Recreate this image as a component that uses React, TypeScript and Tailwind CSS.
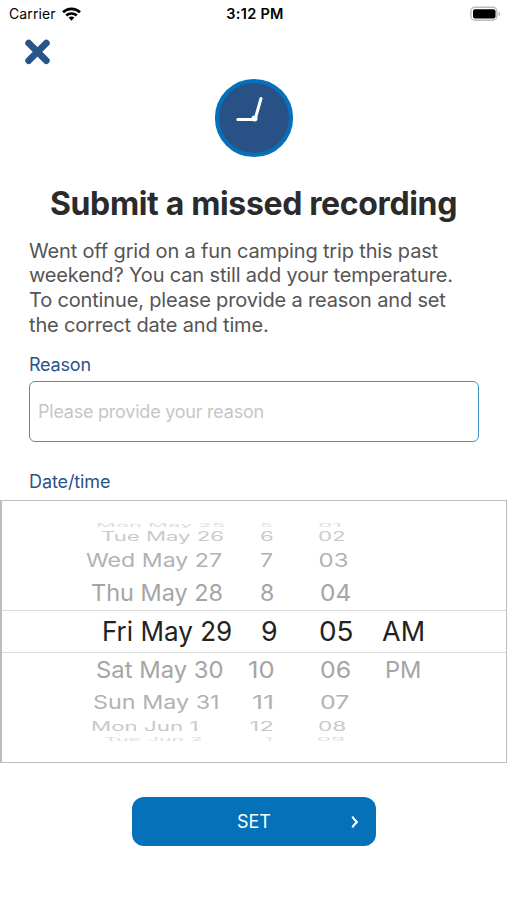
import React, { useLayoutEffect, useRef } from 'react'

interface WheelTextProps {
  text: string
  left: number
  width: number
  scaleY: number
}

interface WheelRow {
  rowClass: string
  textClass: string
  scaleY: number
  // text, left edge and drawn width of each column
  cells: [string, number, number][]
}

const rows: WheelRow[] = [
  { rowClass: 'h-[5px]', textClass: 'text-[#dedede]', scaleY: 0.2, cells: [['Mon May 25', 97, 127], ['5', 261, 11], ['01', 319, 22]] },
  { rowClass: 'h-[20px]', textClass: 'text-[#cacaca]', scaleY: 0.52, cells: [['Tue May 26', 102, 121], ['6', 260.5, 12], ['02', 318.5, 26]] },
  { rowClass: 'h-[28px]', textClass: 'text-[#b2b2b2]', scaleY: 0.78, cells: [['Wed May 27', 87, 134], ['7', 261, 11.5], ['03', 319.5, 28]] },
  { rowClass: 'h-[35px]', textClass: 'text-[#a5a5a5]', scaleY: 0.97, cells: [['Thu May 28', 91.5, 130], ['8', 260.5, 12.5], ['04', 320.5, 29.5]] },
  { rowClass: 'h-[43px] border-y border-[#dcdcdc]', textClass: 'text-[#222]', scaleY: 1.13, cells: [['Fri May 29', 102.5, 128], ['9', 261.5, 14.5], ['05', 320, 32.5], ['AM', 383, 40.5]] },
  { rowClass: 'h-[34px]', textClass: 'text-[#a5a5a5]', scaleY: 0.97, cells: [['Sat May 30', 97, 125], ['10', 248.5, 24.5], ['06', 320.5, 29], ['PM', 386, 34.5]] },
  { rowClass: 'h-[31px]', textClass: 'text-[#b2b2b2]', scaleY: 0.78, cells: [['Sun May 31', 94, 124.5], ['11', 252.5, 20.5], ['07', 320.5, 27]] },
  { rowClass: 'h-[18px]', textClass: 'text-[#cacaca]', scaleY: 0.52, cells: [['Mon Jun 1', 92, 106], ['12', 250.5, 22], ['08', 318.5, 26.5]] },
  { rowClass: 'h-[5px]', textClass: 'text-[#dedede]', scaleY: 0.2, cells: [['Tue Jun 2', 105, 97], ['1', 266, 6], ['09', 318, 26]] },
]

function WheelText({ text, left, width, scaleY }: WheelTextProps) {
  const ref = useRef<HTMLSpanElement>(null)

  useLayoutEffect(() => {
    const el = ref.current
    if (el) {
      // Squash the label so it looks wrapped around the drum
      el.style.transform = `scale(${width / (el.offsetWidth - 2)}, ${scaleY})`
    }
  }, [width, scaleY])

  return (
    <span ref={ref} className="absolute origin-left whitespace-nowrap" style={{ left: left - 2 }}>
      {text}
    </span>
  )
}

function DateWheel() {
  return (
    <div className="h-[263px] w-full border-t border-r border-b border-l-2 border-[#bdbdbd] pt-[21px]">
      {rows.map((row) => (
        <div
          key={row.cells[0][0]}
          className={`relative flex items-center text-2xl leading-7 ${row.rowClass} ${row.textClass}`}
        >
          {row.cells.map(([text, left, width]) => (
            <WheelText key={text} text={text} left={left - 1} width={width} scaleY={row.scaleY} />
          ))}
        </div>
      ))}
    </div>
  )
}

function StatusBar() {
  return (
    <div className="grid h-[27px] grid-cols-3 items-center pr-[6px] pl-[9px] text-black">
      <div className="flex items-center gap-[6px] text-[14px] tracking-[0.1px]">
        Carrier
        <svg width="19" height="14" viewBox="0 0 19 14" fill="none" stroke="currentColor" strokeWidth="2.7">
          <path d="M1 5.3C5.7.7 13.3.7 18 5.3" />
          <path d="M4.2 8.6c3-2.8 7.6-2.8 10.6 0" />
          <path d="M6.6 10.6c1.7-1.5 4.1-1.5 5.8 0L9.5 13.7z" fill="currentColor" stroke="none" />
        </svg>
      </div>
      <div className="text-center text-[14.5px] font-semibold tracking-[0.3px] whitespace-nowrap">3:12 PM</div>
      <svg className="justify-self-end" width="31" height="16" viewBox="0 0 31 16">
        <rect x=".9" y="1.3" width="26" height="13" rx="4" fill="#fff" stroke="#bcbcbc" strokeWidth="1.4" />
        <rect x="3" y="3.3" width="22.5" height="9.2" rx="2" fill="#000" />
        <path d="M28.6 5.5c2.2.8 2.2 4 0 4.8z" fill="#bcbcbc" />
      </svg>
    </div>
  )
}

export default function App() {
  return (
    <div className="flex h-[900px] w-[507px] flex-col overflow-hidden bg-white font-['Inter',sans-serif]">
      <StatusBar />

      <button className="mt-[12px] ml-[25px] size-[26px] text-[#285489]" aria-label="Close">
        <svg width="26" height="26" viewBox="0 0 26 26" stroke="currentColor" strokeWidth="6.8" strokeLinecap="round">
          <path d="M3.7 4.2 21.3 21.6M21.3 4.2 3.7 21.6" />
        </svg>
      </button>

      {/* Clock */}
      <svg className="mt-[13px] self-center" width="80" height="80" viewBox="0 0 80 80">
        <circle cx="40" cy="40" r="37" fill="#285286" stroke="#0671ba" strokeWidth="4.2" />
        <path d="M23.8 41.5H41L47 20.5" fill="none" stroke="#fff" strokeWidth="3" strokeLinecap="round" strokeLinejoin="round" />
        <circle cx="40.5" cy="40.5" r="3" fill="#fff" />
      </svg>

      <h1 className="mt-[26px] text-center text-[32px] leading-[40px] font-bold tracking-[-0.35px] whitespace-nowrap text-[#2b2b2b]">
        Submit a missed recording
      </h1>

      <p className="mt-[14.5px] ml-[29px] text-[20px] leading-[24.7px] tracking-[-0.16px] whitespace-nowrap text-[#555]">
        Went off grid on a fun camping trip this past
        <br />
        weekend? You can still add your temperature.
        <br />
        To continue, please provide a reason and set
        <br />
        the correct date and time.
      </p>

      <label className="mt-[15.7px] ml-[29px] text-[18px] leading-6 tracking-[-0.2px] text-[#2b538b]">Reason</label>
      <input
        className="mt-[4px] ml-[29px] h-[61px] w-[450px] rounded-md border-[1.5px] border-[#3d92c8] px-2 text-[18px] tracking-[-0.23px] placeholder:text-[#c6c6c6]"
        placeholder="Please provide your reason"
      />

      <label className="mt-[28px] mb-[6px] ml-[29px] text-[18px] leading-6 tracking-[-0.1px] text-[#2b538b]">Date/time</label>
      <DateWheel />

      <button className="mt-[34px] ml-[132px] grid h-[49px] w-[244px] grid-cols-[1fr_auto_1fr] items-center rounded-[12px] bg-[#0471b9] text-[18px] text-white">
        <span className="col-start-2">SET</span>
        <svg className="mr-[17px] justify-self-end" width="8" height="14" viewBox="0 0 8 14" fill="none" stroke="currentColor" strokeWidth="2.2">
          <path d="M1.5 1.5C2.3 4 4.7 5.3 5.8 7 4.7 8.7 2.3 10 1.5 12.5" />
        </svg>
      </button>
    </div>
  )
}
